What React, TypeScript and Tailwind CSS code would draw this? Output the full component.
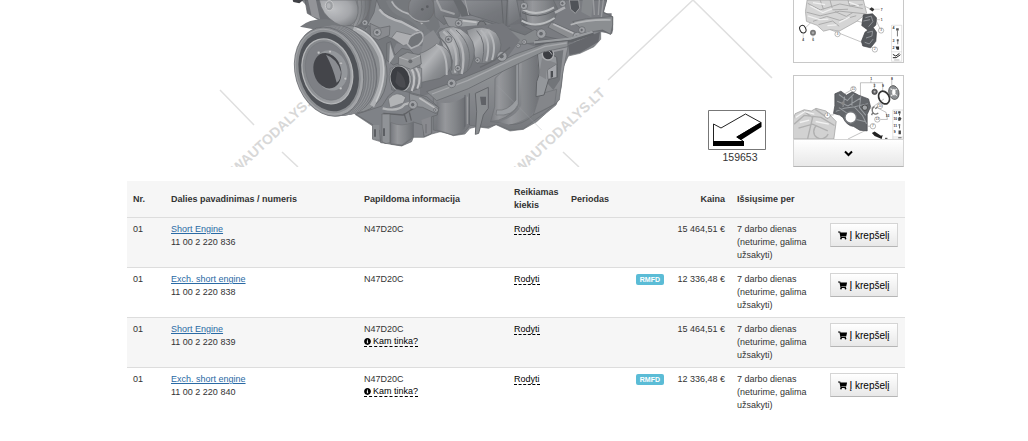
import React from "react";
import { FaShoppingCart, FaInfoCircle } from "react-icons/fa";

type Part = { name: string; number: string; fits: boolean; reman: boolean; price: string };

const parts: Part[] = [
  { name: "Short Engine", number: "11 00 2 220 836", fits: false, reman: false, price: "15 464,51 €" },
  { name: "Exch. short engine", number: "11 00 2 220 838", fits: false, reman: true, price: "12 336,48 €" },
  { name: "Short Engine", number: "11 00 2 220 839", fits: true, reman: false, price: "15 464,51 €" },
  { name: "Exch. short engine", number: "11 00 2 220 840", fits: true, reman: true, price: "12 336,48 €" },
];

function Bolt({ x, y, r = 14 }: { x: number; y: number; r?: number }) {
  return (
    <g>
      <circle cx={x} cy={y} r={r} fill="#a4a7aa" stroke="#5c5f62" strokeWidth="2" />
      <circle cx={x - 1} cy={y} r={r * 0.5} fill="#63666a" stroke="#b5b7b9" strokeWidth="2" />
    </g>
  );
}

function Gradients() {
  return (
    <defs>
      <linearGradient id="metalV" x1="0" y1="0" x2="0" y2="1">
        <stop offset="0" stopColor="#a2a4a7" />
        <stop offset="0.5" stopColor="#8b8e91" />
        <stop offset="1" stopColor="#727579" />
      </linearGradient>
      <linearGradient id="metalH" x1="0" y1="0" x2="1" y2="0">
        <stop offset="0" stopColor="#777a7e" />
        <stop offset="0.3" stopColor="#9b9da0" />
        <stop offset="0.65" stopColor="#85888b" />
        <stop offset="1" stopColor="#696c70" />
      </linearGradient>
      <linearGradient id="shine" x1="0" y1="0" x2="1" y2="1">
        <stop offset="0" stopColor="#8b8e91" />
        <stop offset="0.35" stopColor="#bbbdbf" />
        <stop offset="0.6" stopColor="#8f9295" />
        <stop offset="1" stopColor="#686b6f" />
      </linearGradient>
      <linearGradient id="rim" x1="0" y1="0" x2="1" y2="1">
        <stop offset="0" stopColor="#7d8083" />
        <stop offset="0.5" stopColor="#96999c" />
        <stop offset="1" stopColor="#b4b6b8" />
      </linearGradient>
      <linearGradient id="cover" x1="0" y1="0" x2="1" y2="1">
        <stop offset="0" stopColor="#8e9195" />
        <stop offset="0.5" stopColor="#74777b" />
        <stop offset="1" stopColor="#696c70" />
      </linearGradient>
      <radialGradient id="cone" cx="0.35" cy="0.35" r="0.75">
        <stop offset="0" stopColor="#cbcdcf" />
        <stop offset="0.6" stopColor="#adafb2" />
        <stop offset="1" stopColor="#7d8083" />
      </radialGradient>
      <filter id="soften" x="-2%" y="-2%" width="104%" height="104%" colorInterpolationFilters="sRGB">
        <feGaussianBlur stdDeviation="0.5" />
        <feComponentTransfer>
          <feFuncR type="linear" slope="0.84" intercept="0.08" />
          <feFuncG type="linear" slope="0.84" intercept="0.08" />
          <feFuncB type="linear" slope="0.84" intercept="0.085" />
        </feComponentTransfer>
      </filter>
    </defs>
  );
}

function Block() {
  return (
    <g strokeLinejoin="round">
      <path
        d="M245 0H1160L1150 35L1178 52V90L1172 103L1142 92V118L1122 140L1080 160L1045 168L1030 200L1024 260L1014 300L1008 315L980 338L950 365L910 388L870 393L828 374L806 385L770 380L750 385L735 402L700 407L665 394L635 402L612 412L580 412L575 425L545 438L512 433L498 430L458 418V378L405 343L350 280L300 60Z"
        fill="#84878b"
        stroke="#66696c"
        strokeWidth="2"
      />
      <path d="M1045 135L1140 95L1135 125L1080 158L1048 165Z" fill="#606367" />
      <path d="M640 280L780 245L990 125L1044 140L1028 220L1018 300L975 338L910 387L870 390L830 373L800 382L750 376L730 400L700 405L640 390Z" fill="url(#metalV)" stroke="#63666a" strokeWidth="2" />
      <path d="M650 305Q690 318 735 290V385Q720 402 700 404L650 388Z" fill="url(#metalH)" />
      <path d="M735 285V380M748 280V375" stroke="#5c5f63" strokeWidth="3" />
      <path d="M742 290V372" stroke="#a5a7a9" strokeWidth="3" />
      <path d="M766 280L805 262V325L790 345L776 400L766 403L770 335Z" fill="#8e9194" stroke="#5f6265" strokeWidth="3" />
      <path d="M780 290H798V315H784Z" fill="#5a5d61" />
      <path d="M825 235Q865 195 895 185L893 320Q860 362 812 364L824 320Z" fill="url(#metalH)" stroke="#6a6d70" strokeWidth="2" />
      <path d="M828 345Q880 350 895 312V180L888 188V300Q862 335 830 330Z" fill="#a0a3a6" stroke="#6d7073" strokeWidth="2" />
      <path d="M822 208Q850 216 896 176M810 365Q860 372 890 352" fill="none" stroke="#65686c" strokeWidth="2" />
      <path d="M905 188L950 160L962 270L945 330Q925 360 870 374L835 366Q890 350 904 315Z" fill="url(#metalH)" />
      <path d="M960 282L1010 268L1004 312L970 332L940 345Z" fill="#85888b" stroke="#6b6e71" strokeWidth="2" />
      <path d="M868 374Q910 375 938 346L1010 310" fill="none" stroke="#64676a" strokeWidth="2" />
      <path d="M985 160L1030 150L1020 240L1000 270L982 250Z" fill="#707377" />
      <path d="M952 158L966 145L1010 172L1012 200V232L986 238L972 285L948 290L950 245L958 222Z" fill="#999c9f" stroke="#5a5d60" strokeWidth="3" />
      <path d="M966 174L1010 190L980 210L978 238L957 226Z" fill="#85888b" />
      <path d="M982 210L1010 192V232L984 238Z" fill="#adafb2" stroke="#5d6063" strokeWidth="2" />
      <ellipse cx="984" cy="162" rx="17" ry="18" fill="#303236" stroke="#b4b6b8" strokeWidth="4" />
      <path d="M976 155Q985 145 996 164" fill="none" stroke="#b3b5b7" strokeWidth="3" />
      <path d="M992 213H999V231L992 234Z" fill="#424549" />
    </g>
  );
}

function UpperParts() {
  return (
    <g strokeLinejoin="round">
      <path d="M255 0L262 40L300 62L430 90L470 60V0Z" fill="#6b6e72" stroke="#55585b" strokeWidth="2" />
      <path d="M218 0H250L238 10L220 6Z" fill="#34363a" />
      <path d="M264 0L275 48L300 58L288 0Z" fill="#97999c" />
      <path d="M240 80Q270 55 320 58L430 82L470 120L400 110Z" fill="#75787c" />
      <path d="M395 0H450Q452 52 412 78L380 84Z" fill="url(#metalH)" stroke="#666" strokeWidth="2" />
      <path d="M412 0Q420 45 398 78M424 0Q430 42 410 76M436 0Q440 40 422 70" fill="none" stroke="#6b6e71" strokeWidth="2" />
      <path d="M455 0H640L660 80L620 140L530 130L500 190L440 95Z" fill="#74777b" />
      <path d="M470 0L485 36L540 62L596 88L580 118L540 130L478 95L442 75L462 38Z" fill="#94979a" stroke="#5e6164" strokeWidth="2" />
      <path d="M478 28Q495 53 545 66L600 95" fill="none" stroke="#c4c6c8" strokeWidth="7" />
      <path d="M508 0Q518 32 555 44Q590 54 612 90" fill="none" stroke="#7b7e81" strokeWidth="22" />
      <path d="M515 4Q528 30 562 40Q590 48 607 72" fill="none" stroke="#bdbfc1" strokeWidth="5" />
      <path d="M530 94L575 105L598 93L588 124L550 137L515 113Z" fill="#b6b8ba" stroke="#66696c" strokeWidth="2" />
      <path d="M562 132Q565 102 602 96Q622 112 595 136L574 145Z" fill="#707377" stroke="#b8babc" strokeWidth="5" />
      <path d="M610 80Q645 92 635 132L612 150Z" fill="#7b7e82" />
      <path d="M450 70L480 84L510 78L508 106L475 120L452 110Z" fill="#8b8e91" stroke="#5c5f62" strokeWidth="2" />
      <Bolt x={472} y={97} r={12} />
      <Bolt x={435} y={68} r={9} />
      <path d="M500 130L512 125L525 165L546 145L570 150L590 170L520 195L500 180Z" fill="#7a7d80" stroke="#5c5f62" strokeWidth="2" />
      <path d="M510 132L522 170L507 192Z" fill="#bcbfc1" />
      <ellipse cx="604" cy="24" rx="39" ry="43" fill="url(#cover)" stroke="#666" strokeWidth="2" />
      <path d="M568 44Q590 72 628 62" fill="none" stroke="#a8aaad" strokeWidth="4" />
      <circle cx="607" cy="28" r="4" fill="#55585b" />
      <circle cx="622" cy="20" r="4" fill="#55585b" />
      <path d="M640 0H710L720 48L672 74L645 50Z" fill="url(#cover)" stroke="#626568" strokeWidth="2" />
      <path d="M650 0L664 30L704 42" fill="none" stroke="#a7a9ab" strokeWidth="6" />
      <path d="M700 0H730L760 46L725 50Z" fill="#63666a" />
      <path d="M722 0H856L906 15V72L865 80L752 45Z" fill="url(#cover)" stroke="#5c5f63" strokeWidth="2" />
      <path d="M735 0L746 45" stroke="#a9abad" strokeWidth="3" />
      <path d="M862 0L858 78M845 0L850 74" stroke="#5e6164" strokeWidth="3" />
      <path d="M865 0H945L905 52L865 76Z" fill="url(#cover)" />
      <path d="M670 48L718 55L735 78L725 94L685 78Z" fill="#96999c" stroke="#5c5f62" strokeWidth="2" />
      <path d="M716 55L782 62L798 74L785 92L745 80L718 86Z" fill="#a2a5a8" stroke="#5c5f62" strokeWidth="2" />
      <path d="M728 62L770 67" stroke="#cfd0d1" strokeWidth="5" />
      <ellipse cx="785" cy="77" rx="12" ry="14" fill="#777a7d" stroke="#4e5154" strokeWidth="3" />
      <Bolt x={716} y={70} r={10} />
    </g>
  );
}

function AlternatorPulley() {
  return (
    <g>
      <path d="M298 0Q304 42 345 68Q378 88 400 70Q424 44 408 0Z" fill="url(#cone)" stroke="#6a6d70" strokeWidth="2" />
      <ellipse cx="328" cy="17" rx="12" ry="15" fill="#a2a5a8" stroke="#d5d6d7" strokeWidth="3" />
      <ellipse cx="326" cy="17" rx="6" ry="8" fill="#bfc1c3" />
    </g>
  );
}

function RightHead() {
  return (
    <g strokeLinejoin="round">
      <path d="M870 76L905 70L950 40H1175L1174 100L1080 90L1060 130L960 145L880 118Z" fill="#717478" />
      <path d="M890 0H1160L1150 38L1178 50L1176 100L1120 84L1050 125L970 108L905 75Z" fill="#797c80" stroke="#5c5f62" strokeWidth="2" />
      <path d="M900 20L908 78L940 75L900 50Z" fill="#606367" />
      <path d="M905 0H910L922 70Q960 90 1002 62L1014 28L1000 0Z" fill="url(#metalH)" stroke="#63666a" strokeWidth="2" />
      <path d="M908 28Q950 52 1002 22M905 62Q950 88 1004 54" fill="none" stroke="#c8cacb" strokeWidth="6" />
      <path d="M906 38Q952 60 1004 32" fill="none" stroke="#595c5f" strokeWidth="3" />
      <Bolt x={912} y={18} r={11} />
      <Bolt x={1028} y={10} r={10} />
      <path d="M1005 38L1035 22" stroke="#b7b9bb" strokeWidth="8" />
      <path d="M1048 0H1076L1079 24L1066 40L1052 28Z" fill="#484b4f" stroke="#a0a2a4" strokeWidth="3" />
      <path d="M1088 0L1084 36L1114 52L1120 0Z" fill="#888b8e" />
      <path d="M1120 0L1123 45M1138 0L1135 45M1150 0L1144 52" stroke="#9fa1a3" strokeWidth="4" />
      <path d="M1058 65L1100 56L1178 50V75L1172 103L1148 90L1098 98Z" fill="#8e9194" stroke="#5c5f62" strokeWidth="2" />
      <path d="M1052 74Q1100 58 1172 60" fill="none" stroke="#bfc1c2" strokeWidth="5" />
      <path d="M995 66L1074 101L1060 122L984 82Z" fill="#8f9194" stroke="#5c5f62" strokeWidth="2" />
      <path d="M1000 72L1060 100" stroke="#c5c6c8" strokeWidth="5" />
      <Bolt x={1072} y={110} r={13} />
      <Bolt x={1086} y={90} r={10} />
      <path d="M780 55L910 95L966 86L955 120L900 128L850 108Z" fill="#6f7276" />
      <path d="M790 62L915 105L945 88L965 104L950 128L888 134L820 98Z" fill="#888b8e" stroke="#5c5f62" strokeWidth="2" />
      <Bolt x={964} y={101} r={14} />
      <Bolt x={913} y={126} r={7} />
      <Bolt x={895} y={137} r={6} />
      <path d="M945 128L1052 120L1120 98" fill="none" stroke="#5c5f63" strokeWidth="14" />
      <path d="M942 127L1050 116L1118 95" fill="none" stroke="#9fa2a4" strokeWidth="7" />
    </g>
  );
}

function Turbo() {
  return (
    <g strokeLinejoin="round">
      <path d="M600 170L660 85L850 70L900 120L850 190L700 260L600 290Z" fill="#73767a" />
      <path d="M740 90Q790 70 828 98Q855 135 833 168Q812 198 770 188Z" fill="url(#shine)" stroke="#626568" strokeWidth="2" />
      <path d="M782 90Q816 120 799 184M805 94Q832 128 816 180" fill="none" stroke="#bfc1c3" strokeWidth="6" />
      <path d="M770 92Q802 124 786 188" fill="none" stroke="#6b6e72" strokeWidth="3" />
      <path d="M655 96Q700 60 745 105Q778 145 752 200Q736 230 695 224Z" fill="url(#shine)" stroke="#626568" strokeWidth="2" />
      <path d="M690 88Q745 135 725 222M670 94Q722 140 705 218" fill="none" stroke="#bec0c2" strokeWidth="7" />
      <path d="M681 92Q734 137 716 221M708 90Q765 140 742 210" fill="none" stroke="#6e7174" strokeWidth="3" />
      <path d="M612 110L640 90L660 120L650 150L600 178Z" fill="#8b8e91" />
      <path d="M600 160Q620 155 650 132Q688 140 698 184Q692 220 660 235L600 248Z" fill="url(#shine)" stroke="#626568" strokeWidth="2" />
      <path d="M648 134Q683 153 680 225" fill="none" stroke="#bfc1c3" strokeWidth="6" />
      <path d="M656 110Q700 144 695 212" fill="none" stroke="#686b6e" strokeWidth="4" />
      <path d="M510 205L565 195L605 205V262L565 278L515 270Z" fill="url(#metalV)" stroke="#63666a" strokeWidth="2" />
      <path d="M572 202Q592 232 575 273M588 204Q607 232 592 266" fill="none" stroke="#cccdce" strokeWidth="6" />
      <path d="M580 203Q600 232 584 270" fill="none" stroke="#6d7073" strokeWidth="2" />
      <path d="M536 171L562 157L601 165L604 192L572 208L535 194Z" fill="#979a9c" stroke="#5c5f62" strokeWidth="2" />
      <path d="M538 172L566 181L601 166" fill="none" stroke="#bdbfc0" strokeWidth="3" />
      <circle cx="571" cy="184" r="6" fill="#66696c" />
      <ellipse cx="541" cy="236" rx="33" ry="41" transform="rotate(-12 541 236)" fill="#b3b5b7" stroke="#5e6164" strokeWidth="2" />
      <ellipse cx="540" cy="236" rx="28" ry="37" transform="rotate(-12 540 236)" fill="#303236" />
      <path d="M532 212Q558 230 557 262Q538 267 526 246Z" fill="#404246" />
      <Bolt x={686} y={118} r={10} />
      <Bolt x={714} y={205} r={9} />
      <Bolt x={773} y={181} r={8} />
      <path d="M620 275L695 248L800 205L885 163L978 130L1044 122V140L966 157L850 213L745 266L650 302Z" fill="#8f9295" stroke="#5c5f62" strokeWidth="2" />
      <path d="M636 282L744 241L878 178L974 140L1040 129" fill="none" stroke="#aeb0b2" strokeWidth="4" />
      <Bolt x={846} y={169} r={15} />
      <Bolt x={695} y={250} r={13} />
      <path d="M780 202L822 182L870 142" fill="none" stroke="#64676a" strokeWidth="4" />
    </g>
  );
}

function CrankPulley() {
  const grooves = [0, 1, 2, 3, 4, 5, 6, 7];
  return (
    <g>
      <ellipse cx="394" cy="207" rx="105" ry="133" transform="rotate(-16 394 207)" fill="#8e9194" stroke="#5c5f62" strokeWidth="2" />
      <path d="M400 86Q456 104 482 170Q500 245 456 318" fill="none" stroke="#b9bbbd" strokeWidth="14" />
      <path d="M410 86Q462 104 486 170Q502 235 468 305" fill="none" stroke="#d7d9da" strokeWidth="4" />
      <ellipse cx="364" cy="210" rx="104" ry="136" transform="rotate(-16 364 210)" fill="#777a7e" stroke="#63666a" strokeWidth="2" />
      {grooves.map((n) => (
        <ellipse key={n} cx={360 - n * 4} cy={211 + n / 2} rx="103" ry="136" transform={`rotate(-16 ${360 - n * 4} ${211 + n / 2})`} fill="#85888b" stroke={n % 2 ? "#74777b" : "#9a9c9f"} strokeWidth="2" />
      ))}
      <ellipse cx="327" cy="215" rx="101" ry="136" transform="rotate(-16 327 215)" fill="url(#rim)" stroke="#5f6265" strokeWidth="2" />
      <ellipse cx="325" cy="215" rx="96" ry="129" transform="rotate(-16 325 215)" fill="#8f9295" stroke="#a9abad" strokeWidth="3" />
      <ellipse cx="326" cy="215" rx="88" ry="121" transform="rotate(-16 326 215)" fill="#484b4f" />
      <ellipse cx="322" cy="214" rx="74" ry="99" transform="rotate(-16 322 214)" fill="url(#rim)" stroke="#bfc1c2" strokeWidth="4" />
      <ellipse cx="323" cy="213" rx="65" ry="89" transform="rotate(-16 323 213)" fill="#7e8185" stroke="#74777b" strokeWidth="2" />
      <ellipse cx="332" cy="211" rx="50" ry="61" transform="rotate(-16 332 211)" fill="#999c9f" />
      <ellipse cx="322" cy="212" rx="41" ry="54" transform="rotate(-16 322 212)" fill="#393b3f" />
      <path d="M318 164Q352 176 363 216Q362 242 350 248Q340 204 318 164Z" fill="#8c8f93" />
      {[[296, 158], [330, 155], [363, 190], [376, 236], [362, 265]].map(([x, y]) => (
        <circle key={x} cx={x} cy={y} r="4" fill="#cfd0d1" stroke="#777a7d" strokeWidth="1" />
      ))}
    </g>
  );
}

function LowerBracket() {
  return (
    <g strokeLinejoin="round">
      <path d="M408 343L486 318L505 288L530 268L620 290L656 322L652 345L635 350V400L612 410L608 375L580 366V412L546 437L512 432V370L498 430L482 428L478 390L458 416V374Z" fill="#808387" stroke="#5c5f62" strokeWidth="2" />
      <path d="M505 297Q530 268 557 292L550 309L510 323Z" fill="#bcbec0" stroke="#686b6e" strokeWidth="2" />
      <path d="M488 325Q535 337 554 313L600 300" fill="none" stroke="#bfc1c2" strokeWidth="7" />
      <path d="M490 340L550 345L580 325" fill="none" stroke="#5a5d60" strokeWidth="4" />
      <path d="M552 340L560 366M568 337L574 362" stroke="#5a5d60" strokeWidth="4" />
      <path d="M512 367Q545 383 580 366V410L546 435L512 431Z" fill="url(#metalH)" stroke="#6c6f72" strokeWidth="2" />
      <path d="M486 342H510V428L498 431L486 425Z" fill="#94979a" stroke="#626568" strokeWidth="2" />
      <path d="M458 375H478V418H458Z" fill="#8d9093" />
      <path d="M465 388V410M492 385V408M618 372V400" stroke="#4b4e52" strokeWidth="5" />
      <path d="M604 360L632 350V400L614 408Z" fill="#92959899" />
      <path d="M568 280L605 290L657 323L650 342L608 322L570 318Z" fill="#94979a" stroke="#5c5f62" strokeWidth="2" />
      <path d="M598 294L648 326" stroke="#c8c9ca" strokeWidth="5" />
      <Bolt x={579} y={314} r={13} />
      <Bolt x={648} y={330} r={7} />
    </g>
  );
}

function Diagram() {
  return (
    <svg role="img" aria-label="Short Engine" viewBox="127 0 666 167" preserveAspectRatio="xMinYMin slice" className="h-[167px] min-w-0 flex-1">
      <Gradients />
      <g fill="#d8d8d8" fontFamily="Liberation Sans, Arial, sans-serif" fontSize="14" fontWeight="700" textAnchor="end">
        <text transform="translate(323 94) rotate(-43)">WAUTODALYS.LT</text>
        <text transform="translate(606 94) rotate(-43)">WAUTODALYS.LT</text>
      </g>
      <path d="M220 90L254 125M282 152L298 167M608 80L693 0L772 78M563 152L579 167" fill="none" stroke="#dfdfdf" strokeWidth="1.500" />
      <g filter="url(#soften)">
        <g transform="translate(220 0) scale(0.33333)">
          <Block />
          <UpperParts />
          <RightHead />
          <Turbo />
          <LowerBracket />
          <CrankPulley />
          <AlternatorPulley />
          <path d="M830 255L965 390" stroke="#a5a7aa" strokeWidth="2" opacity="0.5" />
        </g>
      </g>
      <path d="M708.500 110.500H765.500V149.500H708.500Z" fill="#fff" stroke="#777" />
      <path d="M713.500 145V124L721 128L745.500 114L761 123L738 137V141L743 145Z" fill="#fff" />
      <path d="M713.500 142V124L721 128L745.500 114L761 122.500L737 137L743 141" fill="none" stroke="#222" />
      <path d="M713 141H744V146H713ZM761.500 122V127L741 140L736 137Z" fill="#000" />
      <text x="740" y="161" textAnchor="middle" fontFamily="Liberation Sans, Arial, sans-serif" fontSize="10.500" fill="#333">159653</text>
    </svg>
  );
}

function Callout({ x, y, n }: { x: number; y: number; n: string }) {
  return (
    <g>
      <circle cx={x} cy={y} r="8" fill="#fff" stroke="#777" strokeWidth="1.5" />
      <text x={x} y={y + 3} fontSize="9" textAnchor="middle" fill="#333">{n}</text>
    </g>
  );
}

function TimingCaseThumb() {
  return (
    <svg role="img" aria-label="Timing case" viewBox="40 0 333 189" className="block h-full w-full" fontFamily="Liberation Sans, sans-serif">
      <path d="M195 55L248 68M75 85L95 65M150 90L250 130L285 148M258 20L276 28M290 60L304 90" fill="none" stroke="#888" strokeWidth="1.500" />
      <path d="M80 0L75 35L78 65L110 77L130 95L150 90L178 95L205 80L230 66L248 52L262 40L252 0Z" fill="#d5d5d5" stroke="#9c9c9c" strokeWidth="2" />
      <path d="M82 10L120 30L180 12L250 26M78 37L120 48L180 34L258 42M98 65L140 50L180 62L230 48M120 0L130 28M150 0L158 30L205 28M115 75L158 64L178 80M205 0L210 18L250 14M165 35L200 50L220 38" fill="none" stroke="#aaa" strokeWidth="3" />
      <path d="M90 18L128 38L158 26M82 48L118 60L145 58M178 68L210 52M208 6L238 18M142 78L170 76M98 8L135 14" fill="none" stroke="#f0f0f0" strokeWidth="4" />
      <path d="M252 45L280 42L292 54L290 76L282 84L292 98L290 126L274 146L250 140L246 126L257 98L266 92L247 78Z" fill="#55585c" stroke="#3a3c40" strokeWidth="2" />
      <path d="M258 54L276 49L281 66L268 81M264 99L280 95L278 110L260 116M256 129L270 134L282 119M252 64L272 60" fill="none" stroke="#92959a" strokeWidth="3" />
      <ellipse cx="67" cy="89" rx="9" ry="12" transform="rotate(-25 67 89)" fill="#fff" stroke="#222" strokeWidth="3" />
      <circle cx="98" cy="100" r="9" fill="#777" /><circle cx="98" cy="100" r="4" fill="#aaa" />
      <path d="M270 28L277 22L286 28L280 35Z" fill="#333" />
      <path d="M287 28H302M292 60H303M68 104V118M98 110V118" stroke="#777" />
      <g fill="#444" fontSize="10" fontWeight="700"><text x="65" y="126">4</text><text x="96" y="126">6</text><text x="305" y="32">7</text><text x="305" y="64">1</text></g>
      <Callout x={173} y={104} n="3" /><Callout x={306} y={93} n="3" /><Callout x={287} y={151} n="2" />
      <path d="M338 77H369V187H338ZM338 158H369" fill="#fff" stroke="#aaa" />
      <g fill="#333" fontSize="11" fontWeight="700"><text x="341" y="89">4</text><text x="341" y="127">3</text><text x="341" y="148">2</text></g>
      <path d="M352 86H360V93H352ZM354 120H360V126H354Z" fill="#555" /><path d="M356 92V111M357 125V135" stroke="#777" strokeWidth="3" />
      <path d="M350 142H361V152H354Z" fill="#333" /><path d="M342 166L351 171L362 163M342 176H352L365 167" fill="none" stroke="#222" strokeWidth="3" /><path d="M346 183H362" stroke="#999" strokeWidth="2" />
    </svg>
  );
}

function HousingThumb() {
  return (
    <svg role="img" aria-label="Housing cover" viewBox="40 227 333 187" preserveAspectRatio="xMidYMin slice" className="block h-full w-full" fontFamily="Liberation Sans, sans-serif">
      <path d="M242 286V247H308V272M283 247V264M273 240V247M335 238V254M195 280L216 268M145 344L163 342M205 414L258 388M270 325L312 295M264 376L282 376M290 320L318 335L322 356L302 356M318 345H323" fill="none" stroke="#888" strokeWidth="1.500" />
      <path d="M40 414V365L48 339L75 327L96 331L110 323L140 331L170 362L163 414Z" fill="#d2d2d2" stroke="#999" strokeWidth="2" />
      <path d="M45 370L75 344L125 350L165 374M72 330L100 350L85 414M108 326L145 352M58 382L100 370L145 390M112 374A22 22 0 1 0 146 399" fill="none" stroke="#b0b0b0" strokeWidth="4" />
      <path d="M50 350L76 333L105 340M62 365L90 358M109 362L148 370" fill="none" stroke="#f1f1f1" strokeWidth="4" />
      <path d="M162 338L166 315V280L184 272L200 284L218 274L237 284L266 295L272 318L262 341V390L240 388L222 377Q201 375 190 350L180 343Z" fill="#63666a" stroke="#44464a" strokeWidth="2" />
      <path d="M178 282L203 300L222 281M173 302L205 316L241 293M169 332L194 323L225 318L264 309M243 288L239 321L258 344M224 319L248 344L260 369M195 288L190 319M217 285L217 315M229 356L255 362M178 321L203 338" fill="none" stroke="#999da1" strokeWidth="3" />
      <circle cx="213" cy="350" r="17" fill="#fff" stroke="#73767a" strokeWidth="4" />
      <circle cx="255" cy="321" r="8" fill="#a0a3a6" stroke="#333" strokeWidth="2" /><circle cx="190" cy="308" r="5" fill="#888" />
      <ellipse cx="312" cy="291" rx="15" ry="20" transform="rotate(-30 312 291)" fill="none" stroke="#333" strokeWidth="5" />
      <ellipse cx="341" cy="276" rx="15" ry="21" transform="rotate(-15 341 276)" fill="#8c8f92" stroke="#444" strokeWidth="2" />
      <ellipse cx="341" cy="275" rx="6" ry="10" fill="#fff" stroke="#555" />
      <path d="M331 265L337 268M351 265L345 269M332 287L337 282M350 285L345 281" stroke="#eee" strokeWidth="3" />
      <circle cx="284" cy="274" r="8" fill="#656568" stroke="#333" strokeWidth="2" /><circle cx="284" cy="274" r="3" fill="#bbb" />
      <path d="M284 318Q274 322 278 334Q284 345 295 337M278 337L275 343M286 324L294 318" fill="none" stroke="#777" strokeWidth="4" />
      <path d="M276 396L284 392L303 404L308 402L305 414L284 405Z" fill="#222" /><path d="M315 412H322" stroke="#333" strokeWidth="3" />
      <Callout x={221} y={266} n="11" /><Callout x={144} y={344} n="4" /><Callout x={300} y={316} n="10" /><Callout x={279} y={376} n="7" /><Callout x={292} y={356} n="13" />
      <g fill="#333" fontSize="10" fontWeight="700"><text x="271" y="240">1</text><text x="281" y="260">3</text><text x="306" y="260">9</text><text x="333" y="238">8</text><text x="317" y="349">13</text></g>
      <path d="M338 328H369V414H338ZM338 408H369" fill="#fff" stroke="#aaa" />
      <g fill="#333" fontSize="10" fontWeight="700"><text x="340" y="339">14</text><text x="340" y="358">10</text><text x="340" y="377">11</text><text x="341" y="397">9</text></g>
      <path d="M354 332H361V338H354ZM354 351L359 348L364 353L360 360H354ZM355 370H360V374H355ZM355 389H362V400H355Z" fill="#444" /><path d="M358 338V344M358 373V383M354 410H364" stroke="#666" strokeWidth="3" />
    </svg>
  );
}

const dashed = "cursor-pointer border-b border-dashed border-black leading-[10px] text-black";

function Row({ part, shaded }: { part: Part; shaded: boolean }) {
  return (
    <tr className={shaded ? "border-t border-[#dddddd] bg-[#f6f6f6]" : "border-t border-[#dddddd]"}>
      <td className="px-1.5 py-[5px]">01</td>
      <td className="px-1.5 py-[5px]">
        <a href="#part" className="text-[#2a6aa5] underline">{part.name}</a>
        <div>{part.number}</div>
      </td>
      <td className="px-1.5 py-[5px]">
        <div>N47D20C</div>
        {part.fits && (
          <button type="button" className={`${dashed} flex items-center gap-[2px]`}>
            <FaInfoCircle className="size-[7px]" aria-hidden="true" />
            Kam tinka?
          </button>
        )}
      </td>
      <td className="px-1.5 py-[5px]"><button type="button" className={dashed}>Rodyti</button></td>
      <td />
      <td className="px-1.5 py-[5px] text-right">
        {part.reman && <span className="inline-block rounded-xs bg-[#5bbcd6] px-1 text-[7px] leading-[11px] font-bold text-white">RMFD</span>}
      </td>
      <td className="px-1.5 py-[5px] text-right whitespace-nowrap">{part.price}</td>
      <td className="px-1.5 py-[5px]">7 darbo dienas (neturime, galima užsakyti)</td>
      <td className="px-1.5 py-[5px]">
        <button type="button" className="flex h-6 w-[68px] items-center justify-center gap-[2px] border border-[#d5d5d5] border-b-[#b5b5b5] bg-linear-to-b from-white to-[#e8e8e8] text-[10px] whitespace-nowrap text-black">
          <FaShoppingCart className="size-[9px]" aria-hidden="true" />
          Į krepšelį
        </button>
      </td>
    </tr>
  );
}

export default function App() {
  return (
    <main className="bg-white pl-1 font-['Liberation_Sans',Arial,sans-serif] text-[9px] leading-[13px] text-[#333333]">
      <div className="mx-auto w-full max-w-[778px]">
        <section className="flex items-start pr-px">
          <Diagram />
          <aside className="flex w-[111px] shrink-0 flex-col">
            <a href="#timing-case" className="mb-3 block h-[63px] border border-t-0 border-[#c8c8c8]"><TimingCaseThumb /></a>
            <a href="#housing" className="block h-16 border border-b-0 border-[#c8c8c8]"><HousingThumb /></a>
            <button type="button" aria-label="Daugiau" className="flex h-7 items-center justify-center border border-[#d5d5d5] border-b-[#b5b5b5] bg-linear-to-b from-white to-[#e8e8e8] text-black">
              <svg viewBox="0 0 9 7" className="h-[7px] w-[9px]" fill="none" stroke="currentColor" strokeWidth="2" aria-hidden="true"><path d="M1 1.500L4.500 5L8 1.500" /></svg>
            </button>
          </aside>
        </section>
        <table className="mt-3.5 w-full table-fixed border-collapse text-left align-top">
          <colgroup>
            <col className="w-[38px]" />
            <col className="w-[193px]" />
            <col className="w-[150px]" />
            <col className="w-[57px]" />
            <col className="w-[60px]" />
            <col className="w-[45px]" />
            <col className="w-[61px]" />
            <col className="w-[93px]" />
            <col className="w-[81px]" />
          </colgroup>
          <thead className="bg-[#f6f6f6]">
            <tr className="h-9">
              <th className="px-1.5">Nr.</th>
              <th className="px-1.5">Dalies pavadinimas / numeris</th>
              <th className="px-1.5">Papildoma informacija</th>
              <th className="px-1.5 py-[5px]">Reikiamas kiekis</th>
              <th className="px-1.5">Periodas</th>
              <td />
              <th className="px-1.5 text-right">Kaina</th>
              <th className="px-1.5">Išsiųsime per</th>
              <td />
            </tr>
          </thead>
          <tbody className="align-top">
            {parts.map((part, i) => <Row key={part.number} part={part} shaded={i % 2 === 0} />)}
          </tbody>
        </table>
      </div>
    </main>
  );
}
